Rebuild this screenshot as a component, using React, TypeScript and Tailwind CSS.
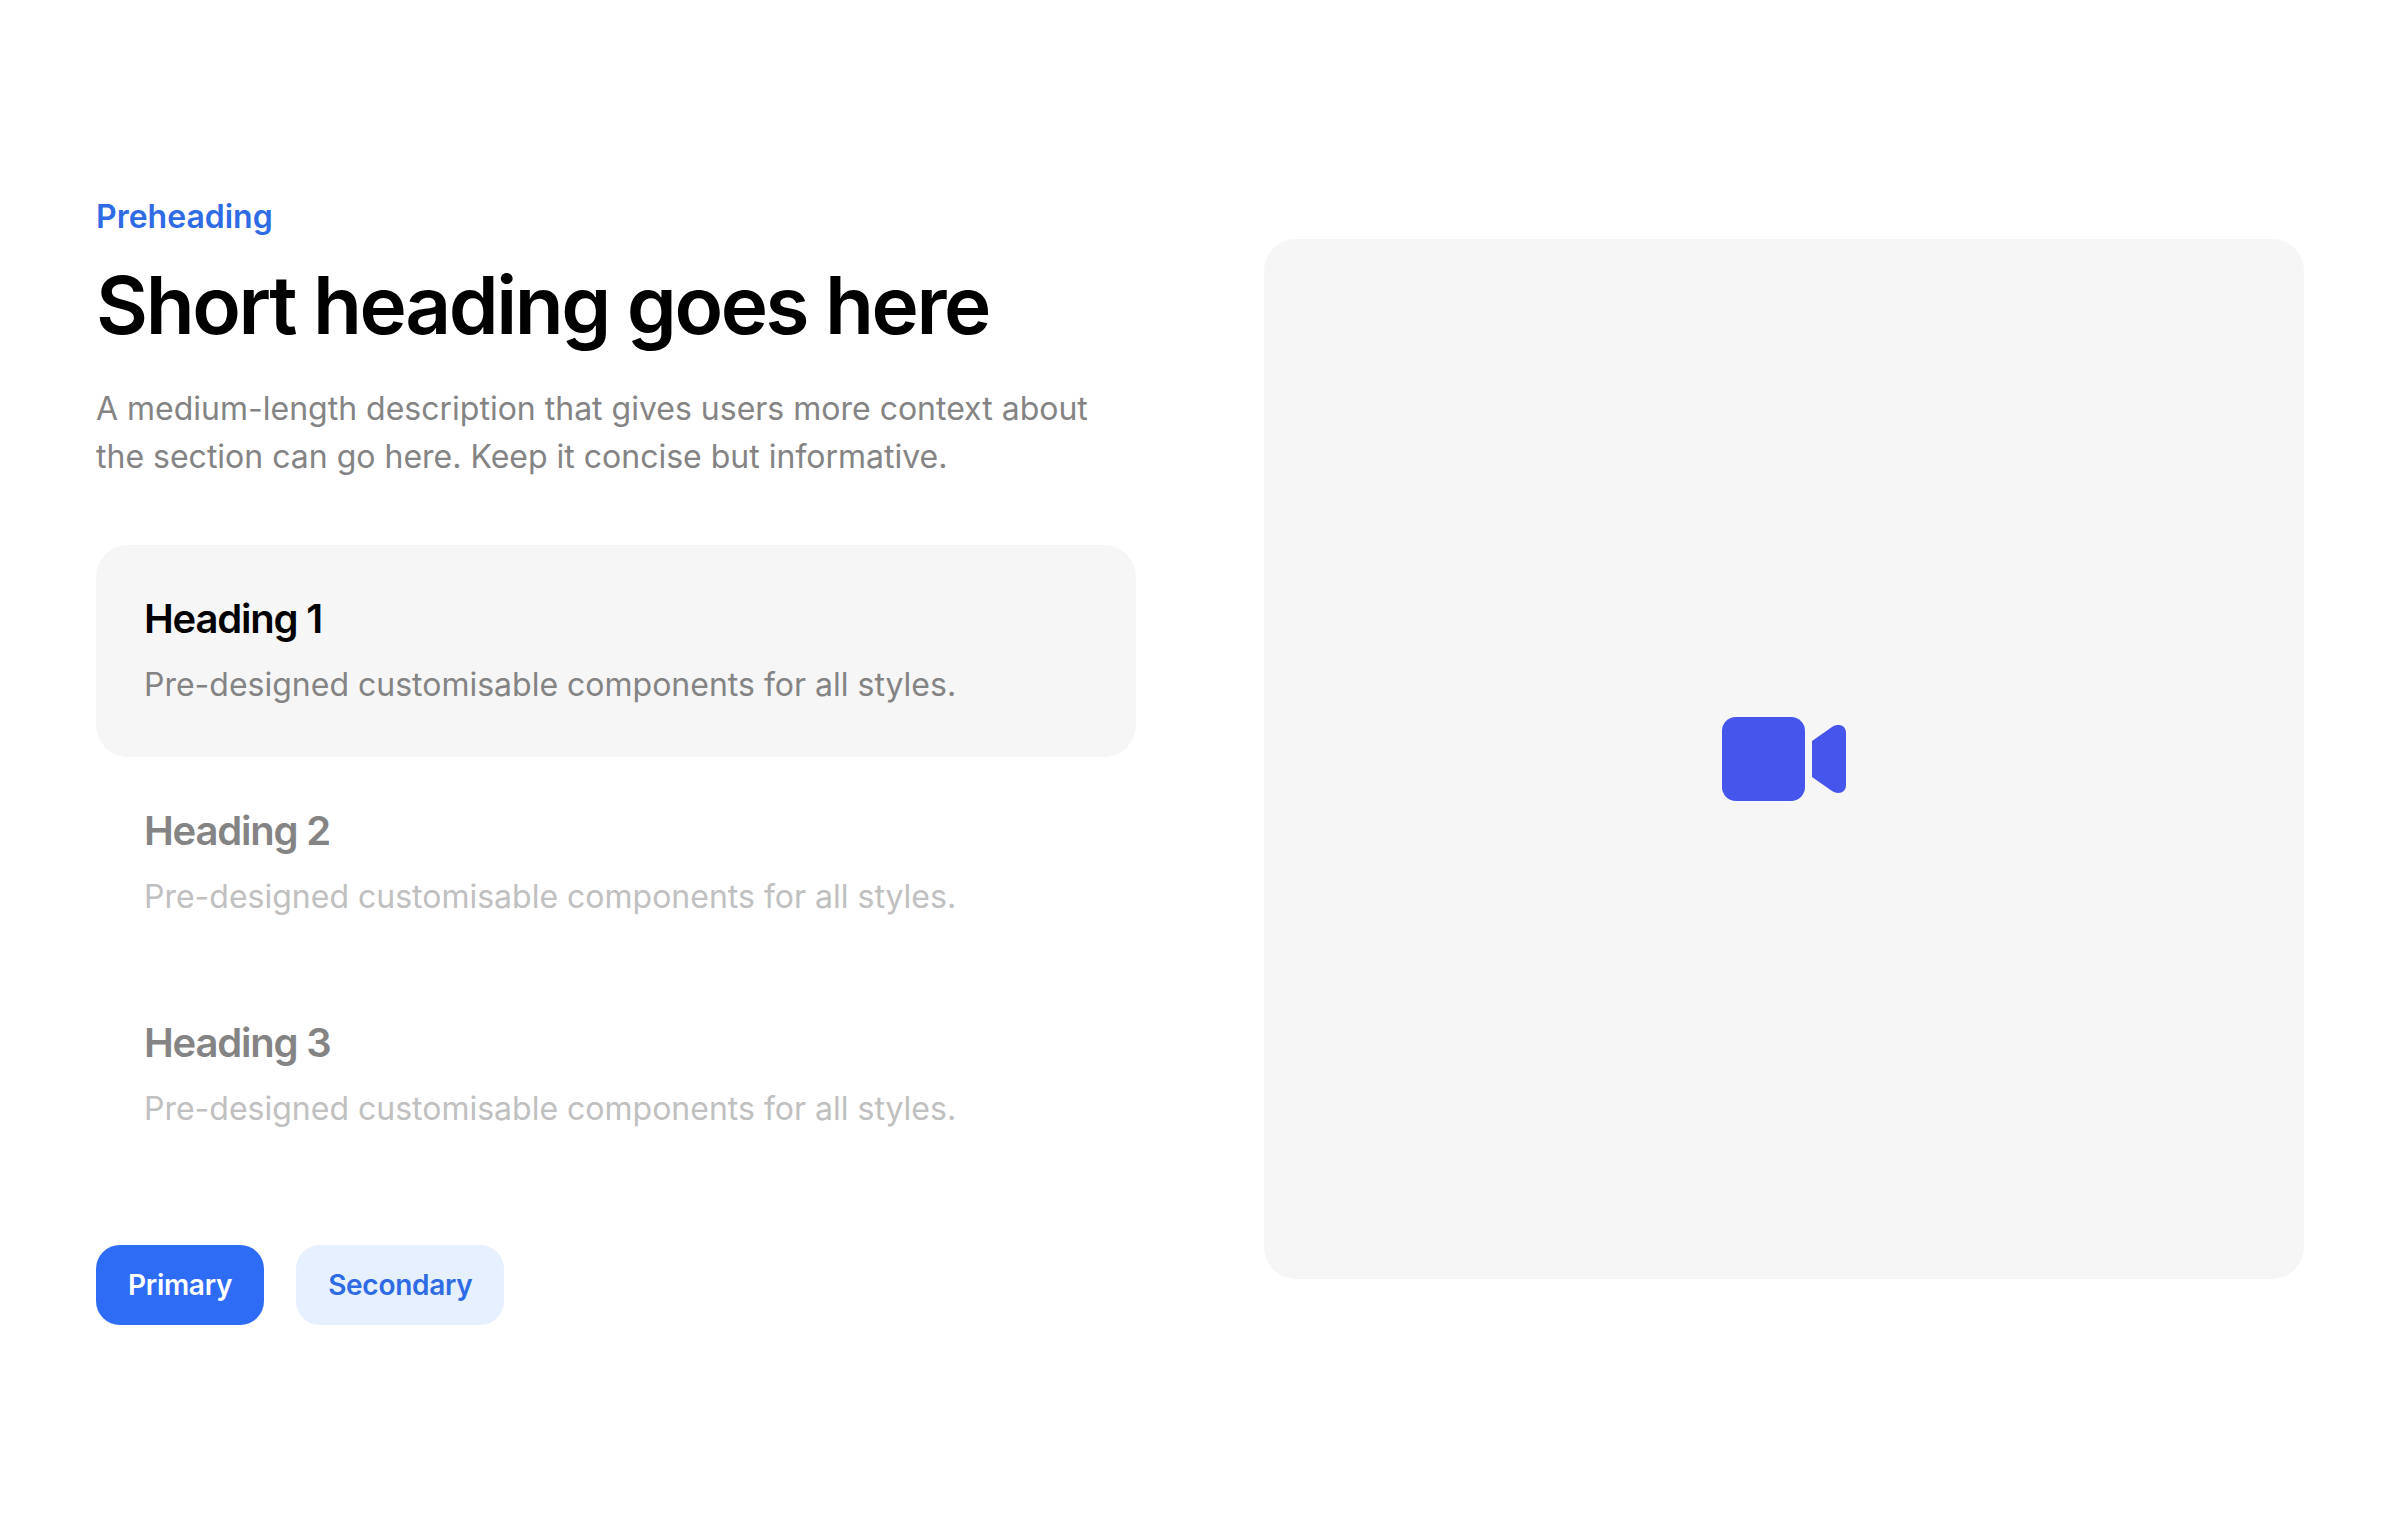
const items = [
  { title: 'Heading 1', active: true },
  { title: 'Heading 2', active: false },
  { title: 'Heading 3', active: false },
];

function FeatureItem({ title, active }: { title: string; active: boolean }) {
  return (
    <div className={active ? 'rounded-[32px] bg-[#f6f6f6] p-12' : 'rounded-[32px] p-12'}>
      <h3 className={active ? 'text-[40px] leading-[52px] font-semibold tracking-[-1.2px] text-black' : 'text-[40px] leading-[52px] font-semibold tracking-[-1.2px] text-[#848484]'}>
        {title}
      </h3>
      <p className={active ? 'mt-4 text-[32px] leading-[48px] text-[#848484]' : 'mt-4 text-[32px] leading-[48px] text-[#c0c0c0]'}>
        Pre-designed customisable components for all styles.
      </p>
    </div>
  );
}

function VideoIcon() {
  return (
    <svg width="124" height="84" viewBox="0 0 124 84" fill="#4655ec" aria-hidden="true">
      <rect x="0" y="0" width="83" height="84" rx="14" />
      <path d="M90 24 L110 10 C116 6 124 8 124 16 V68 C124 76 116 78 110 74 L90 60 Z" />
    </svg>
  );
}

export default function App() {
  return (
    <div className="flex min-h-[1516px] items-center gap-32 bg-white px-24 pt-0.5 font-['Inter',sans-serif]">
      <div className="w-[1040px]">
        <p className="text-[32px] leading-[48px] font-semibold text-[#2f6be4]">Preheading</p>
        <h1 className="mt-4 text-[80px] leading-[96px] font-semibold tracking-[-2.4px] text-black">Short heading goes here</h1>
        <p className="mt-8 text-[32px] leading-[48px] text-[#848484]">
          A medium-length description that gives users more context about the section can go here. Keep it concise but informative.
        </p>
        <div className="mt-16 flex flex-col">
          {items.map((item) => (
            <FeatureItem key={item.title} title={item.title} active={item.active} />
          ))}
        </div>
        <div className="mt-16 flex gap-8">
          <button type="button" className="rounded-3xl bg-[#2e6cf6] px-8 py-5 text-[28px] leading-10 font-semibold tracking-[-0.28px] text-white">Primary</button>
          <button type="button" className="rounded-3xl bg-[#e6f0fe] px-8 py-5 text-[28px] leading-10 font-semibold tracking-[-0.28px] text-[#2f6be4]">Secondary</button>
        </div>
      </div>
      <div className="flex h-[1040px] w-[1040px] items-center justify-center rounded-[32px] bg-[#f6f6f6]">
        <VideoIcon />
      </div>
    </div>
  );
}
